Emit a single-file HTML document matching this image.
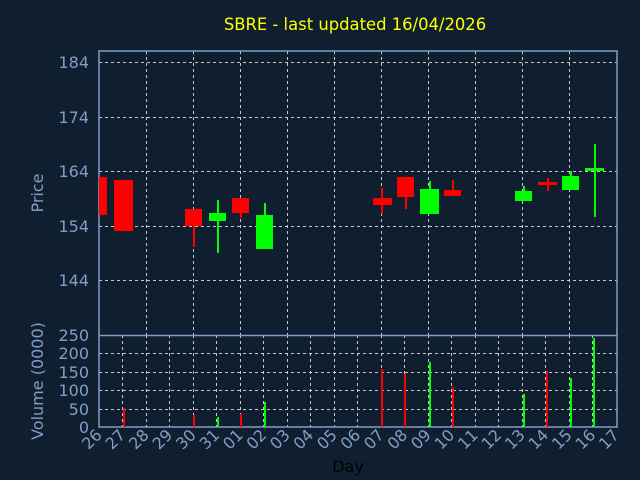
<!DOCTYPE html>
<html><head><style>html,body{margin:0;padding:0;background:#0f1f2f;}svg{display:block}</style></head><body>
<svg width="640" height="480" xmlns="http://www.w3.org/2000/svg" font-family="DejaVu Sans, Liberation Sans, sans-serif">
<rect width="640" height="480" fill="#0f1f2f"/>
<text x="355" y="30" fill="#ffff00" font-size="16.4" text-anchor="middle">SBRE - last updated 16/04/2026</text>
<g stroke="#c8c8c8" stroke-width="1" stroke-dasharray="3,3" fill="none">
<path d="M99 62.5H617M99 117.5H617M99 171.5H617M99 226.5H617M99 280.5H617"/>
<path d="M146.5 51V335M193.5 51V335M240.5 51V335M287.5 51V335M334.5 51V335M381.5 51V335M428.5 51V335M475.5 51V335M522.5 51V335M569.5 51V335"/>
<path d="M99 353.5H617M99 372.5H617M99 390.5H617M99 409.5H617"/>
<path d="M122.5 335V427M146.5 335V427M169.5 335V427M193.5 335V427M216.5 335V427M240.5 335V427M263.5 335V427M287.5 335V427M310.5 335V427M334.5 335V427M357.5 335V427M381.5 335V427M404.5 335V427M428.5 335V427M451.5 335V427M475.5 335V427M498.5 335V427M522.5 335V427M545.5 335V427M569.5 335V427M592.5 335V427"/>
</g>
<g stroke="#7f9fc8" stroke-width="1.5" fill="none">
<rect x="99" y="51" width="518" height="376"/>
<path d="M99 335.5H617"/>
</g>
<g shape-rendering="crispEdges">
<g fill="#ff0000">
<rect x="99" y="177" width="8" height="38"/>
<rect x="114" y="180" width="19" height="51"/>
<rect x="185" y="209" width="17" height="17"/><rect x="193" y="226" width="2" height="21"/>
<rect x="232" y="198" width="17" height="15"/><rect x="240" y="213" width="2" height="5"/>
<rect x="373" y="198" width="19" height="7"/><rect x="381" y="188" width="2" height="26"/>
<rect x="397" y="177" width="17" height="20"/><rect x="405" y="197" width="2" height="12"/>
<rect x="444" y="190" width="17" height="6"/><rect x="452" y="180" width="2" height="10"/>
<rect x="538" y="182" width="19" height="3"/><rect x="547" y="178" width="2" height="13"/>
<rect x="123" y="408" width="2" height="19"/>
<rect x="193" y="415" width="2" height="12"/>
<rect x="240" y="414" width="2" height="13"/>
<rect x="381" y="369" width="2" height="58"/>
<rect x="404" y="374" width="2" height="53"/>
<rect x="452" y="387" width="2" height="40"/>
<rect x="546" y="371" width="2" height="56"/>
</g>
<g fill="#00ff00">
<rect x="209" y="213" width="17" height="8"/><rect x="217" y="200" width="2" height="53"/>
<rect x="256" y="215" width="17" height="34"/><rect x="264" y="203" width="2" height="12"/>
<rect x="420" y="189" width="19" height="25"/><rect x="429" y="181" width="2" height="8"/>
<rect x="515" y="191" width="17" height="10"/><rect x="523" y="186" width="2" height="5"/>
<rect x="562" y="176" width="17" height="14"/><rect x="570" y="171" width="2" height="5"/>
<rect x="585" y="168" width="19" height="3"/><rect x="594" y="144" width="2" height="73"/>
<rect x="217" y="417" width="2" height="10"/>
<rect x="264" y="402" width="2" height="25"/>
<rect x="429" y="362" width="2" height="65"/>
<rect x="523" y="394" width="2" height="33"/>
<rect x="570" y="378" width="2" height="49"/>
<rect x="593" y="338" width="2" height="89"/>
</g>
</g>
<g fill="#7f9fc8" font-size="16" text-anchor="end">
<text x="89" y="68">184</text><text x="89" y="123">174</text><text x="89" y="177">164</text><text x="89" y="232">154</text><text x="89" y="286">144</text>
<text x="89" y="341">250</text><text x="89" y="359">200</text><text x="89" y="378">150</text><text x="89" y="396">100</text><text x="89" y="415">50</text><text x="89" y="433">0</text>
<text transform="translate(43,193) rotate(-90)" text-anchor="middle">Price</text>
<text transform="translate(43,381) rotate(-90)" text-anchor="middle">Volume (0000)</text>
</g>
<g fill="#7f9fc8" font-size="16" text-anchor="end">
<text transform="translate(103,436) rotate(-45)">26</text>
<text transform="translate(126.5,436) rotate(-45)">27</text>
<text transform="translate(150,436) rotate(-45)">28</text>
<text transform="translate(173.5,436) rotate(-45)">29</text>
<text transform="translate(197,436) rotate(-45)">30</text>
<text transform="translate(220.5,436) rotate(-45)">31</text>
<text transform="translate(244,436) rotate(-45)">01</text>
<text transform="translate(267.5,436) rotate(-45)">02</text>
<text transform="translate(291,436) rotate(-45)">03</text>
<text transform="translate(314.5,436) rotate(-45)">04</text>
<text transform="translate(338,436) rotate(-45)">05</text>
<text transform="translate(361.5,436) rotate(-45)">06</text>
<text transform="translate(385,436) rotate(-45)">07</text>
<text transform="translate(408.5,436) rotate(-45)">08</text>
<text transform="translate(432,436) rotate(-45)">09</text>
<text transform="translate(455.5,436) rotate(-45)">10</text>
<text transform="translate(479,436) rotate(-45)">11</text>
<text transform="translate(502.5,436) rotate(-45)">12</text>
<text transform="translate(526,436) rotate(-45)">13</text>
<text transform="translate(549.5,436) rotate(-45)">14</text>
<text transform="translate(573,436) rotate(-45)">15</text>
<text transform="translate(596.5,436) rotate(-45)">16</text>
<text transform="translate(620,436) rotate(-45)">17</text>
</g>
<text x="348" y="472" fill="#000000" font-size="16" text-anchor="middle">Day</text>
</svg>
</body></html>
